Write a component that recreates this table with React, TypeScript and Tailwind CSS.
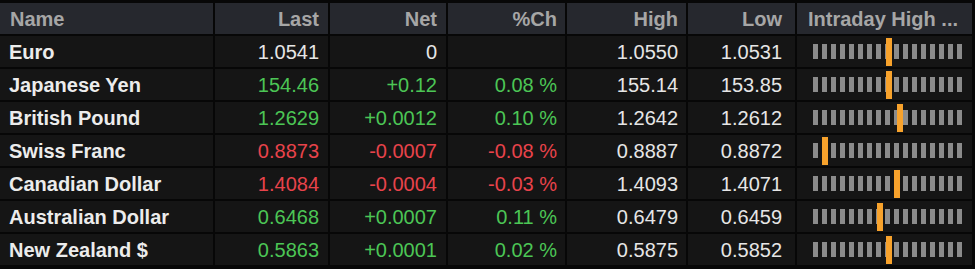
import React from "react";

type Row = {
  name: string;
  last: string;
  net: string;
  pct: string;
  high: string;
  low: string;
  tone: "flat" | "up" | "down";
  mark: number;
};

const rows: Row[] = [
  { name: "Euro", last: "1.0541", net: "0", pct: "", high: "1.0550", low: "1.0531", tone: "flat", mark: 73 },
  { name: "Japanese Yen", last: "154.46", net: "+0.12", pct: "0.08 %", high: "155.14", low: "153.85", tone: "up", mark: 73 },
  { name: "British Pound", last: "1.2629", net: "+0.0012", pct: "0.10 %", high: "1.2642", low: "1.2612", tone: "up", mark: 84 },
  { name: "Swiss Franc", last: "0.8873", net: "-0.0007", pct: "-0.08 %", high: "0.8887", low: "0.8872", tone: "down", mark: 9 },
  { name: "Canadian Dollar", last: "1.4084", net: "-0.0004", pct: "-0.03 %", high: "1.4093", low: "1.4071", tone: "down", mark: 81 },
  { name: "Australian Dollar", last: "0.6468", net: "+0.0007", pct: "0.11 %", high: "0.6479", low: "0.6459", tone: "up", mark: 64 },
  { name: "New Zealand $", last: "0.5863", net: "+0.0001", pct: "0.02 %", high: "0.5875", low: "0.5852", tone: "up", mark: 73 },
];

const toneClass = {
  flat: "text-[#e6e6e6]",
  up: "text-[#4cc655]",
  down: "text-[#e8434b]",
};

const headCell = "bg-[#26282e] h-[31px] flex items-center text-[#a6a6a6] font-bold";
const cell = "bg-[#151515] h-[31px] flex items-center";

function RangeBar({ mark }: { mark: number }) {
  return (
    <div className="relative h-[31px] flex items-center">
      <div className="flex gap-[4px]">
        {Array.from({ length: 17 }).map((_, i) => (
          <div key={i} className="w-[5px] h-[15px] bg-[#8b8b8b]" />
        ))}
      </div>
      <div
        className="absolute top-[2px] w-[6px] h-[28px] bg-[#f7a22c]"
        style={{ left: mark }}
      />
    </div>
  );
}

export default function App() {
  return (
    <div
      className="w-[975px] h-[269px] bg-[#070707] pt-[3px] pb-[4px] pr-[3px] text-[20px] leading-none"
      style={{ fontFamily: '"Liberation Sans", Arial, sans-serif' }}
    >
      <div className="grid grid-cols-[213px_113px_116px_117px_119px_107px_175px] gap-[2px]">
        <div className={`${headCell} pl-[10px]`}>Name</div>
        <div className={`${headCell} justify-end pr-[9px]`}>Last</div>
        <div className={`${headCell} justify-end pr-[9px]`}>Net</div>
        <div className={`${headCell} justify-end pr-[8px]`}>%Ch</div>
        <div className={`${headCell} justify-end pr-[8px]`}>High</div>
        <div className={`${headCell} justify-end pr-[13px]`}>Low</div>
        <div className={`${headCell} pl-[11px] whitespace-nowrap`}>Intraday High ...</div>

        {rows.map((r) => (
          <React.Fragment key={r.name}>
            <div className={`${cell} pl-[9px] font-bold text-[#ececec]`}>{r.name}</div>
            <div className={`${cell} justify-end pr-[9px] ${toneClass[r.tone]}`}>{r.last}</div>
            <div className={`${cell} justify-end pr-[9px] ${toneClass[r.tone]}`}>{r.net}</div>
            <div className={`${cell} justify-end pr-[8px] ${toneClass[r.tone]}`}>{r.pct}</div>
            <div className={`${cell} justify-end pr-[8px] text-[#e6e6e6]`}>{r.high}</div>
            <div className={`${cell} justify-end pr-[13px] text-[#e6e6e6]`}>{r.low}</div>
            <div className={`${cell} pl-[16px]`}>
              <RangeBar mark={r.mark} />
            </div>
          </React.Fragment>
        ))}
      </div>
    </div>
  );
}
